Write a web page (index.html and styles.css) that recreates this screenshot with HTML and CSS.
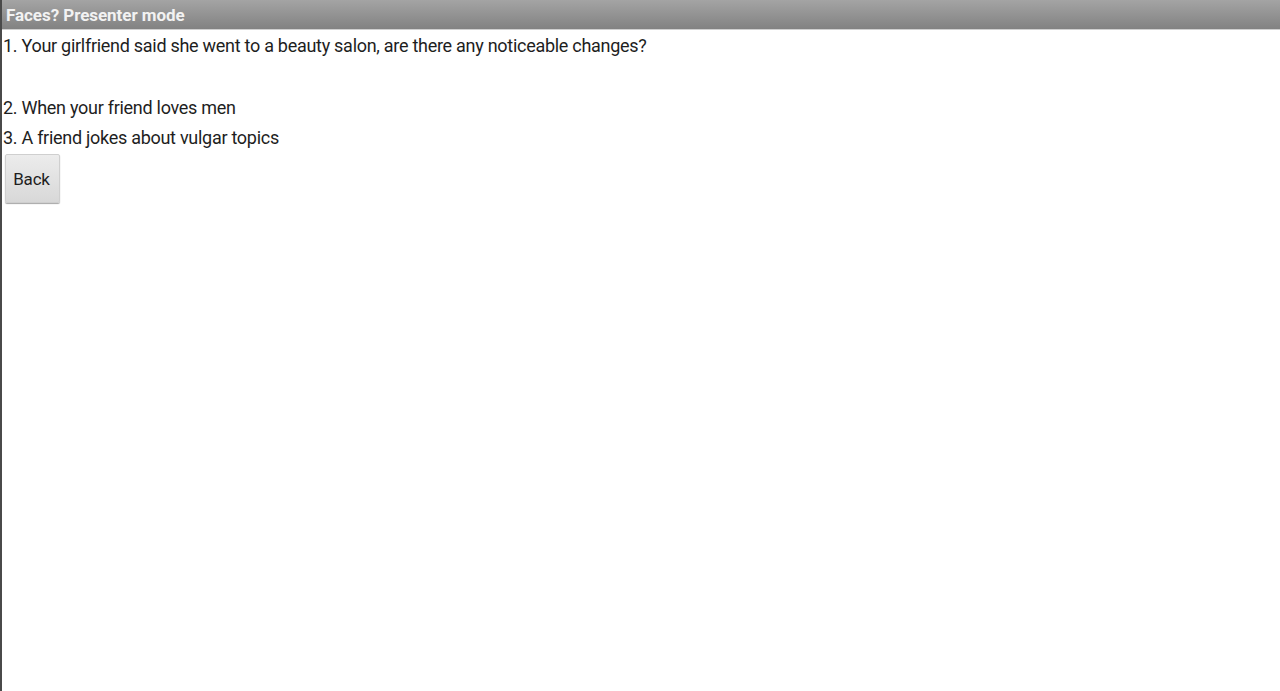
FILE: index.html
```html
<!DOCTYPE html>
<html>
<head>
<meta charset="utf-8">
<link rel="stylesheet" href="styles.css">
</head>
<body>
<div class="app">
  <div class="titlebar">Faces? Presenter mode</div>
  <div class="content">
    <div class="q q-first">1. Your girlfriend said she went to a beauty salon, are there any noticeable changes?</div>
    <div class="q">2. When your friend loves men</div>
    <div class="q">3. A friend jokes about vulgar topics</div>
    <button class="btn">Back</button>
  </div>
</div>
</body>
</html>
```
FILE: styles.css
```css
html, body {
  margin: 0;
  padding: 0;
  background: #ffffff;
}
.app {
  height: 691px;
  border-left: 2px solid #4a4a4a;
  box-sizing: border-box;
  font-family: Roboto, "Noto Sans", sans-serif;
}
.titlebar {
  height: 29px;
  border-bottom: 1px solid #d0d0d0;
  background: linear-gradient(#a4a4a4, #828282);
  color: #f2f2f2;
  font-weight: bold;
  font-size: 17px;
  line-height: 31px;
  padding-left: 4px;
  letter-spacing: -0.05px;
}
.content {
  padding-left: 1px;
  padding-top: 1px;
}
.q {
  font-size: 18px;
  line-height: 30px;
  color: #1e1e1e;
  letter-spacing: -0.28px;
}
.q-first {
  margin-bottom: 32px;
}
.btn {
  display: block;
  margin: 1px 0 0 2px;
  width: 55px;
  height: 49px;
  font-family: Roboto, "Noto Sans", sans-serif;
  font-size: 17px;
  letter-spacing: -0.2px;
  color: #1e1e1e;
  background: linear-gradient(#ececec, #d8d8d8);
  border: 1px solid #cfcfcf;
  border-radius: 2px;
  box-shadow: 0 1px 1px rgba(0,0,0,0.35);
  padding: 0 0 0 0;
  text-indent: -2px;
}
```
